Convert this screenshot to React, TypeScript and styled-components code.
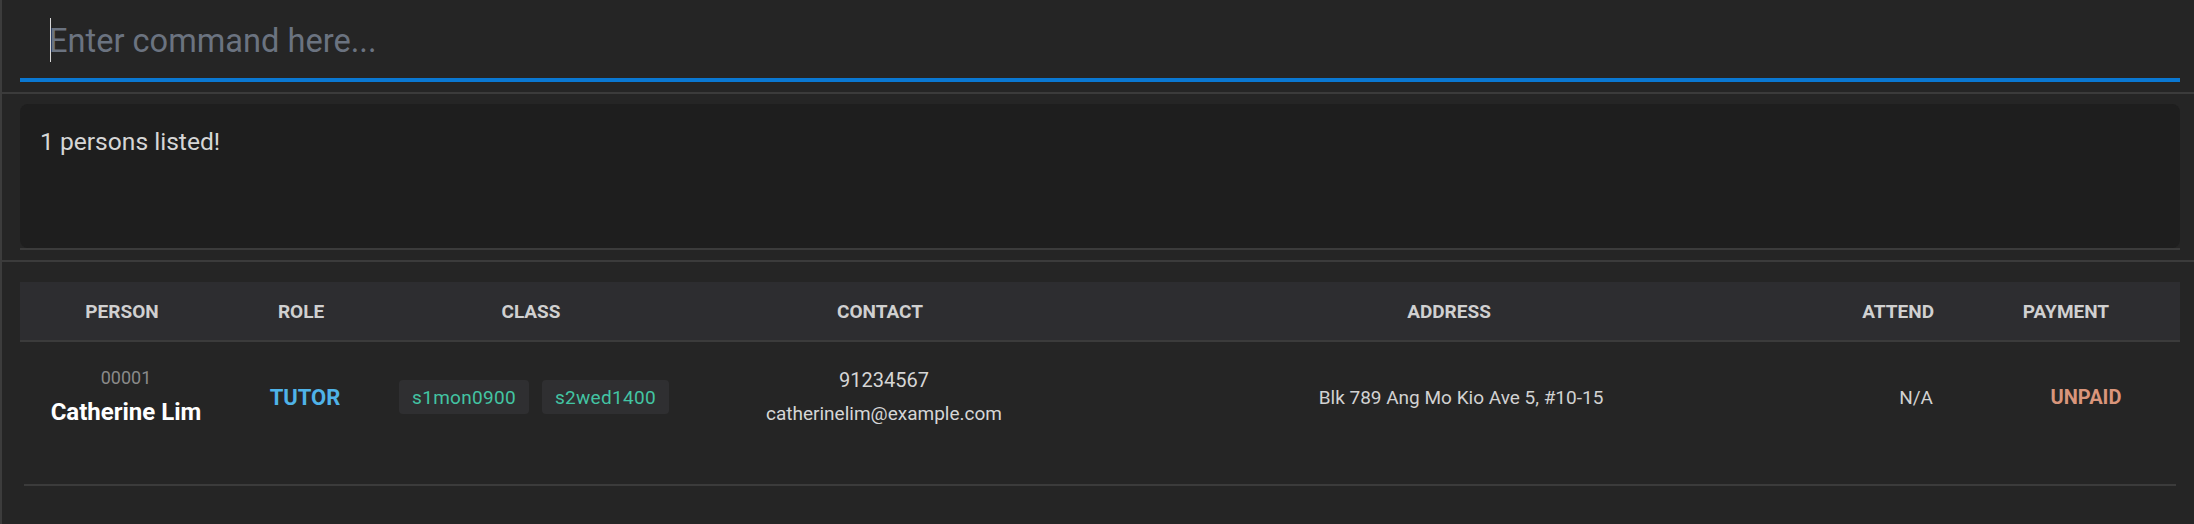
import React from "react";
import styled, { createGlobalStyle } from "styled-components";

const Global = createGlobalStyle`
  html, body {
    margin: 0;
    padding: 0;
    background: #252525;
  }
  body {
    font-family: Roboto, "Noto Sans", "Liberation Sans", sans-serif;
    -webkit-font-smoothing: antialiased;
  }
  * { box-sizing: border-box; }
`;

const Shell = styled.div`
  min-height: 100vh;
  background: #252525;
  border-left: 2px solid #3c3c3c;
  display: flex;
  flex-direction: column;
`;

const Section = styled.div<{ $top?: number; $bottom?: number }>`
  padding: ${(p) => p.$top ?? 0}px 14px ${(p) => p.$bottom ?? 0}px 18px;
`;

const CommandField = styled.div`
  position: relative;
  padding: 19px 0 15px 29px;
  border-bottom: 4px solid #0a78d2;
`;

const Caret = styled.span`
  position: absolute;
  left: 30px;
  top: 18px;
  width: 1px;
  height: 44px;
  background: #d8d8d8;
`;

const CommandInput = styled.input`
  display: block;
  width: 100%;
  height: 44px;
  border: none;
  outline: none;
  padding: 0;
  margin: 0;
  background: transparent;
  color: #e6e6e6;
  font-family: Roboto, "Noto Sans", sans-serif;
  font-size: 32.6px;
  line-height: 44px;
  &::placeholder {
    color: #6b7380;
  }
`;

const Separator = styled.div`
  height: 2px;
  background: #3b3b3b;
`;

const ResultFrame = styled.div`
  border-bottom: 2px solid #3b3b3b;
`;

const ResultBox = styled.div`
  height: 144px;
  background: #1e1e1e;
  border-radius: 8px;
  padding: 23px 20px 0 20px;
  color: #d6d6d6;
  font-size: 24.6px;
  line-height: 30px;
`;

const cols = "204px 154px 306px 392px 746px 144px 1fr";

const HeaderRow = styled.div`
  display: grid;
  grid-template-columns: ${cols};
  height: 60px;
  background: #2d2d30;
  border-bottom: 2px solid #3b3b3b;
  align-items: center;
`;

const HeadCell = styled.div<{ $align?: string; $pl?: number; $pr?: number }>`
  display: flex;
  justify-content: ${(p) => p.$align ?? "center"};
  padding-left: ${(p) => p.$pl ?? 0}px;
  padding-right: ${(p) => p.$pr ?? 0}px;
  color: #d0d0d0;
  font-size: 19px;
  font-weight: 700;
  text-transform: uppercase;
`;

const DataRow = styled.div`
  display: grid;
  grid-template-columns: ${cols};
  height: 110px;
  align-items: center;
`;

const Cell = styled.div<{ $align?: string; $pl?: number; $pr?: number }>`
  display: flex;
  flex-direction: column;
  align-items: ${(p) => p.$align ?? "center"};
  padding-left: ${(p) => p.$pl ?? 0}px;
  padding-right: ${(p) => p.$pr ?? 0}px;
  color: #d2d2d2;
  font-size: 19px;
`;

const PersonId = styled.div`
  color: #8a8a8a;
  font-size: 18px;
  line-height: 22px;
`;

const PersonName = styled.div`
  margin-top: 8px;
  color: #ffffff;
  font-size: 24px;
  font-weight: 700;
  line-height: 30px;
`;

const Role = styled.div`
  color: #4fb3e8;
  font-size: 22px;
  font-weight: 700;
`;

const ChipList = styled.div`
  display: flex;
  gap: 13px;
  padding-left: 6px;
`;

const Chip = styled.span`
  display: inline-flex;
  align-items: center;
  height: 34px;
  padding: 0 13px;
  border-radius: 4px;
  background: #2f2f31;
  color: #43c4a3;
  font-size: 19px;
  letter-spacing: 0.3px;
`;

const ContactLine = styled.div<{ $gap?: number }>`
  margin-top: ${(p) => p.$gap ?? 0}px;
  font-size: ${(p) => (p.$gap ? 19 : 20)}px;
  line-height: 24px;
  color: #d6d6d6;
`;

const Payment = styled.div<{ $paid?: boolean }>`
  color: ${(p) => (p.$paid ? "#43c4a3" : "#d9957b")};
  font-size: 20px;
  font-weight: 700;
`;

const RowDivider = styled.div`
  margin: 32px 4px 0;
  height: 2px;
  background: #3b3b3b;
`;

type Person = {
  id: string;
  name: string;
  role: string;
  classes: string[];
  phone: string;
  email: string;
  address: string;
  attend: string;
  payment: string;
};

const people: Person[] = [
  {
    id: "00001",
    name: "Catherine Lim",
    role: "TUTOR",
    classes: ["s1mon0900", "s2wed1400"],
    phone: "91234567",
    email: "catherinelim@example.com",
    address: "Blk 789 Ang Mo Kio Ave 5, #10-15",
    attend: "N/A",
    payment: "UNPAID",
  },
];

export default function App() {
  return (
    <>
      <Global />
      <Shell>
        <Section>
          <CommandField>
            <Caret />
            <CommandInput placeholder="Enter command here..." />
          </CommandField>
        </Section>
        <Section $top={10} />
        <Separator />
        <Section $top={10} $bottom={10}>
          <ResultFrame>
            <ResultBox>{people.length} persons listed!</ResultBox>
          </ResultFrame>
        </Section>
        <Separator />
        <Section $top={20}>
          <HeaderRow>
            <HeadCell>Person</HeadCell>
            <HeadCell>Role</HeadCell>
            <HeadCell>Class</HeadCell>
            <HeadCell>Contact</HeadCell>
            <HeadCell>Address</HeadCell>
            <HeadCell $align="flex-end" $pr={32}>
              Attend
            </HeadCell>
            <HeadCell $pr={14}>Payment</HeadCell>
          </HeaderRow>
          {people.map((p) => (
            <React.Fragment key={p.id}>
              <DataRow>
                <Cell $pl={8}>
                  <PersonId>{p.id}</PersonId>
                  <PersonName>{p.name}</PersonName>
                </Cell>
                <Cell $pl={8}>
                  <Role>{p.role}</Role>
                </Cell>
                <Cell>
                  <ChipList>
                    {p.classes.map((c) => (
                      <Chip key={c}>{c}</Chip>
                    ))}
                  </ChipList>
                </Cell>
                <Cell $pl={8}>
                  <ContactLine>{p.phone}</ContactLine>
                  <ContactLine $gap={10}>{p.email}</ContactLine>
                </Cell>
                <Cell $pl={24}>{p.address}</Cell>
                <Cell $align="flex-end" $pr={33}>
                  {p.attend}
                </Cell>
                <Cell $pl={26}>
                  <Payment>{p.payment}</Payment>
                </Cell>
              </DataRow>
              <RowDivider />
            </React.Fragment>
          ))}
        </Section>
      </Shell>
    </>
  );
}
